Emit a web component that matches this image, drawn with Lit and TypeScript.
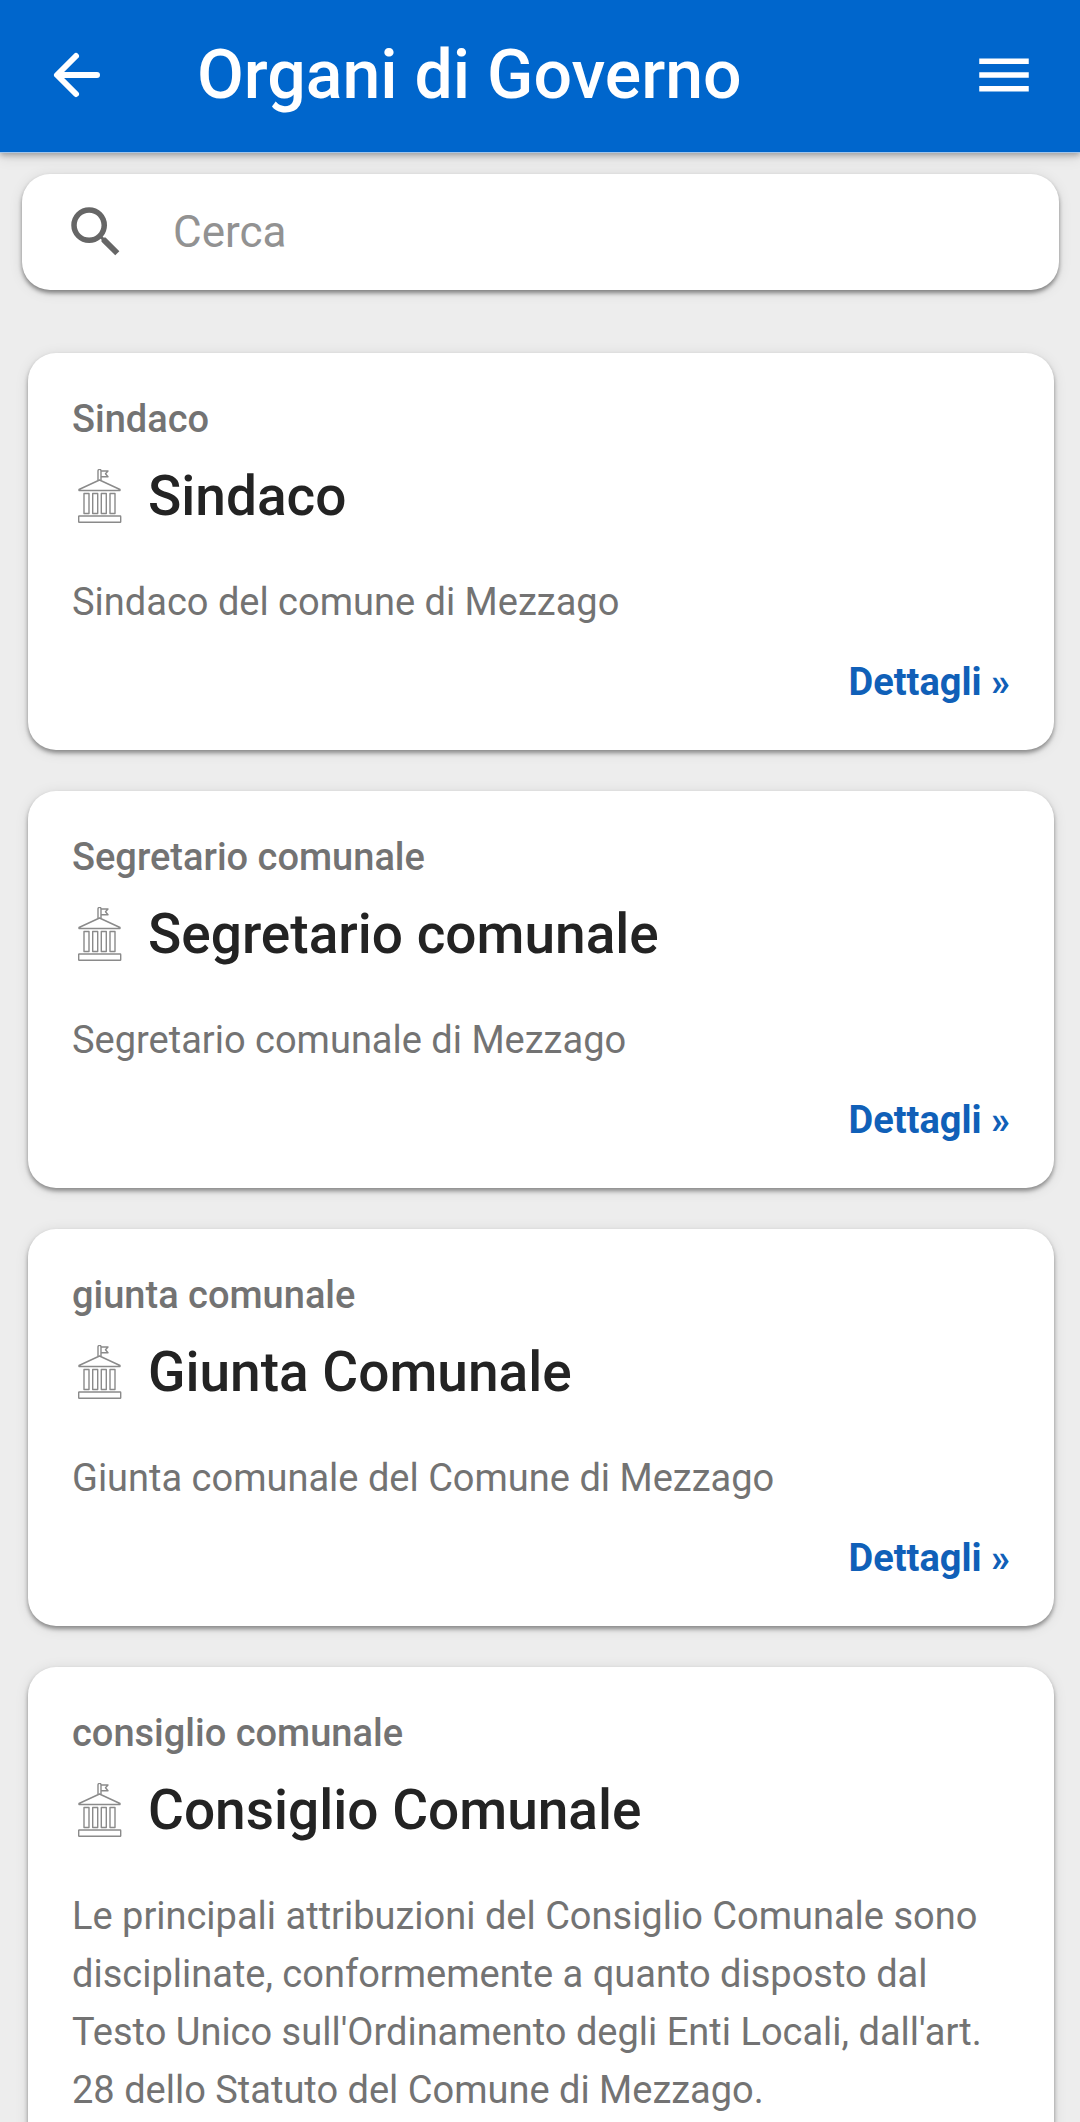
import { LitElement, html, css, nothing } from "lit";
import { customElement, property } from "lit/decorators.js";

interface Organo {
  category: string;
  name: string;
  description: string;
  href?: string;
}

const ORGANI: Organo[] = [
  {
    category: "Sindaco",
    name: "Sindaco",
    description: "Sindaco del comune di Mezzago",
    href: "#sindaco",
  },
  {
    category: "Segretario comunale",
    name: "Segretario comunale",
    description: "Segretario comunale di Mezzago",
    href: "#segretario",
  },
  {
    category: "giunta comunale",
    name: "Giunta Comunale",
    description: "Giunta comunale del Comune di Mezzago",
    href: "#giunta",
  },
  {
    category: "consiglio comunale",
    name: "Consiglio Comunale",
    description:
      "Le principali attribuzioni del Consiglio Comunale sono disciplinate, conformemente a quanto disposto dal Testo Unico sull'Ordinamento degli Enti Locali, dall'art. 28 dello Statuto del Comune di Mezzago.",
  },
];

@customElement("organo-card")
export class OrganoCard extends LitElement {
  @property({ attribute: false }) organo!: Organo;

  static styles = css`
    :host {
      display: block;
    }
    .card {
      display: flex;
      flex-direction: column;
      padding: 37px 44px 39px;
      background: #fff;
      border-radius: 28px;
      box-shadow: 0 3px 4px rgba(0, 0, 0, 0.38), 0 2px 14px rgba(0, 0, 0, 0.1);
      font-size: 38px;
      line-height: 58px;
      color: #737373;
    }
    .category,
    .name,
    .description {
      margin: 0;
    }
    .category {
      font-weight: 500;
    }
    .heading {
      display: flex;
      align-items: center;
      gap: 21px;
      margin: 16px 0 45px;
    }
    .icon {
      flex: none;
      width: 55px;
      height: 55px;
    }
    .name {
      font-size: 55px;
      line-height: 64px;
      font-weight: 500;
      color: #232323;
    }
    .link {
      align-self: flex-end;
      margin-top: 22px;
      font-weight: 700;
      color: #1060b8;
      text-decoration: none;
    }
  `;

  render() {
    const { category, name, description, href } = this.organo;
    return html`
      <article class="card">
        <p class="category">${category}</p>
        <div class="heading">
          <svg
            class="icon"
            viewBox="0 1 55 55"
            fill="none"
            stroke="#8a8a8a"
            stroke-width="1.4"
            stroke-linejoin="round"
            aria-hidden="true"
          >
            <path d="M26 12V2.900a1.500 1.500 0 0 1 3 0V12" />
            <path d="M29 3H36L33.500 5.800L36 8.700H29" />
            <path d="M27.500 12L48 21.500V22.500H7V21.500Z" />
            <path d="M12 25.500h5v20h-5zM20.700 25.500h5v20h-5zM29.300 25.500h5v20h-5zM38 25.500h5v20h-5z" />
            <rect x="6.700" y="48" width="42" height="6.300" rx="0.500" />
          </svg>
          <h2 class="name">${name}</h2>
        </div>
        <p class="description">${description}</p>
        ${href ? html`<a class="link" href=${href}>Dettagli »</a>` : nothing}
      </article>
    `;
  }
}

@customElement("app-root")
export class AppRoot extends LitElement {
  static styles = css`
    :host {
      display: flex;
      flex-direction: column;
      height: 100vh;
      background: #ededed;
      font-family: Roboto, "Liberation Sans", sans-serif;
    }
    .bar {
      position: relative;
      z-index: 1;
      display: flex;
      align-items: center;
      flex: none;
      box-sizing: border-box;
      min-height: 153px;
      padding: 0 43px 2px;
      background: #0066cc;
      border-bottom: 1px solid #a4c6ea;
      box-shadow: 0 2px 6px rgba(0, 0, 0, 0.3), 0 4px 14px rgba(0, 0, 0, 0.1);
      color: #fff;
    }
    .button {
      display: flex;
      flex: none;
      padding: 0;
      border: 0;
      background: none;
      color: inherit;
      cursor: pointer;
    }
    .glyph {
      flex: none;
      width: 66px;
      height: 66px;
    }
    .title {
      flex: 1;
      margin: 0 0 0 88px;
      font-size: 68px;
      line-height: 78px;
      font-weight: 500;
    }
    .content {
      flex: 1;
      min-height: 0;
      overflow-y: auto;
      scrollbar-width: none;
      padding: 21px 21px 28px 22px;
    }
    .search {
      display: flex;
      align-items: center;
      gap: 44px;
      min-height: 116px;
      padding: 0 41px;
      background: #fff;
      border-radius: 28px;
      box-shadow: 0 3px 4px rgba(0, 0, 0, 0.42), 0 2px 14px rgba(0, 0, 0, 0.1);
      color: #666;
    }
    .field {
      flex: 1;
      min-width: 0;
      padding: 0;
      border: 0;
      outline: 0;
      background: none;
      font: 400 44px/52px Roboto, "Liberation Sans", sans-serif;
      color: #232323;
    }
    .field::placeholder {
      color: #929292;
      opacity: 1;
    }
    .list {
      display: flex;
      flex-direction: column;
      gap: 41px;
      margin: 63px 0 0;
      padding: 0 5px 0 6px;
      list-style: none;
    }
  `;

  render() {
    return html`
      <header class="bar">
        <button class="button" type="button" aria-label="Indietro">
          <svg
            class="glyph"
            viewBox="0 0 66 66"
            fill="none"
            stroke="currentColor"
            stroke-width="6"
            stroke-linecap="round"
            stroke-linejoin="round"
            aria-hidden="true"
          >
            <path d="M54 33H14.500M33 14L14 33L33 52" />
          </svg>
        </button>
        <h1 class="title">Organi di Governo</h1>
        <button class="button" type="button" aria-label="Menu">
          <svg class="glyph" viewBox="0 0 24 24" fill="currentColor" aria-hidden="true">
            <path d="M3 18h18v-2H3v2zm0-5h18v-2H3v2zm0-7v2h18V6H3z" />
          </svg>
        </button>
      </header>
      <main class="content">
        <label class="search">
          <svg class="glyph" viewBox="0 0 24 24" fill="currentColor" aria-hidden="true">
            <path
              d="M15.500 14h-.79l-.28-.27A6.471 6.471 0 0 0 16 9.500 6.500 6.500 0 1 0 9.500 16c1.610 0 3.090-.59 4.230-1.570l.27.28v.79l5 4.990L20.490 19l-4.990-5zm-6 0C7.010 14 5 11.990 5 9.500S7.010 5 9.500 5 14 7.010 14 9.500 11.990 14 9.500 14z"
            />
          </svg>
          <input class="field" type="search" placeholder="Cerca" aria-label="Cerca" />
        </label>
        <ul class="list">
          ${ORGANI.map(
            (organo) => html`<li><organo-card .organo=${organo}></organo-card></li>`,
          )}
        </ul>
      </main>
    `;
  }
}
